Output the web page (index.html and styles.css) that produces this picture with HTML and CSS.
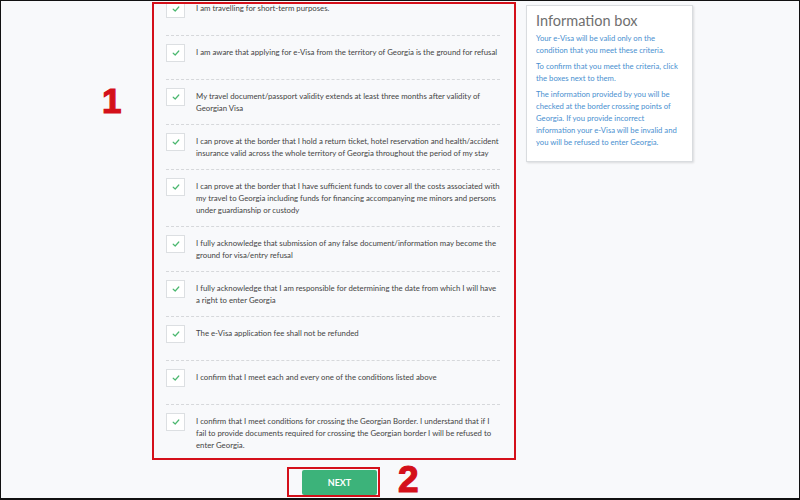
FILE: index.html
```html
<!DOCTYPE html>
<html>
<head>
<meta charset="utf-8">
<link rel="stylesheet" href="styles.css">
</head>
<body>
<div class="frame">
  <div class="gutter"><span class="mark">1</span></div>
  <div class="center">
    <div class="redbox">
      <ul class="list">
        <li class="item"><span class="cb"><svg viewBox="0 0 10 10"><polyline points="2.2,5.2 4.2,7 7.8,3"/></svg></span><p class="txt">I am travelling for short-term purposes.</p></li>
        <li class="item"><span class="cb"><svg viewBox="0 0 10 10"><polyline points="2.2,5.2 4.2,7 7.8,3"/></svg></span><p class="txt">I am aware that applying for e-Visa from the territory of Georgia is the ground for refusal</p></li>
        <li class="item"><span class="cb"><svg viewBox="0 0 10 10"><polyline points="2.2,5.2 4.2,7 7.8,3"/></svg></span><p class="txt">My travel document/passport validity extends at least three months after validity of<br>Georgian Visa</p></li>
        <li class="item"><span class="cb"><svg viewBox="0 0 10 10"><polyline points="2.2,5.2 4.2,7 7.8,3"/></svg></span><p class="txt">I can prove at the border that I hold a return ticket, hotel reservation and health/accident<br>insurance valid across the whole territory of Georgia throughout the period of my stay</p></li>
        <li class="item"><span class="cb"><svg viewBox="0 0 10 10"><polyline points="2.2,5.2 4.2,7 7.8,3"/></svg></span><p class="txt">I can prove at the border that I have sufficient funds to cover all the costs associated with<br>my travel to Georgia including funds for financing accompanying me minors and persons<br>under guardianship or custody</p></li>
        <li class="item"><span class="cb"><svg viewBox="0 0 10 10"><polyline points="2.2,5.2 4.2,7 7.8,3"/></svg></span><p class="txt">I fully acknowledge that submission of any false document/information may become the<br>ground for visa/entry refusal</p></li>
        <li class="item"><span class="cb"><svg viewBox="0 0 10 10"><polyline points="2.2,5.2 4.2,7 7.8,3"/></svg></span><p class="txt">I fully acknowledge that I am responsible for determining the date from which I will have<br>a right to enter Georgia</p></li>
        <li class="item"><span class="cb"><svg viewBox="0 0 10 10"><polyline points="2.2,5.2 4.2,7 7.8,3"/></svg></span><p class="txt">The e-Visa application fee shall not be refunded</p></li>
        <li class="item"><span class="cb"><svg viewBox="0 0 10 10"><polyline points="2.2,5.2 4.2,7 7.8,3"/></svg></span><p class="txt">I confirm that I meet each and every one of the conditions listed above</p></li>
        <li class="item last"><span class="cb"><svg viewBox="0 0 10 10"><polyline points="2.2,5.2 4.2,7 7.8,3"/></svg></span><p class="txt">I confirm that I meet conditions for crossing the Georgian Border. I understand that if I<br>fail to provide documents required for crossing the Georgian border I will be refused to<br>enter Georgia.</p></li>
      </ul>
    </div>
    <div class="actions">
      <div class="btnbox"><button class="next">NEXT</button></div>
      <span class="mark two">2</span>
    </div>
  </div>
  <aside class="info">
    <h2 class="info-title">Information box</h2>
    <p class="info-p">Your e-Visa will be valid only on the<br>condition that you meet these criteria.</p>
    <p class="info-p">To confirm that you meet the criteria, click<br>the boxes next to them.</p>
    <p class="info-p">The information provided by you will be<br>checked at the border crossing points of<br>Georgia. If you provide incorrect<br>information your e-Visa will be invalid and<br>you will be refused to enter Georgia.</p>
  </aside>
</div>
</body>
</html>
```

FILE: styles.css
```css
* { box-sizing: border-box; }
html, body { margin: 0; padding: 0; }
body { width: 800px; height: 500px; overflow: hidden; font-family: Lato, "Open Sans", sans-serif; }

.frame {
  width: 800px;
  height: 500px;
  display: flex;
  align-items: flex-start;
  background: #f8f9fb;
  border: 1px solid #111;
  border-bottom-width: 2px;
  overflow: hidden;
}

.gutter {
  width: 151px;
  padding: 82px 0 0 101px;
  flex: none;
}

.mark {
  font-family: "Liberation Sans", Arial, sans-serif;
  font-weight: 900;
  font-size: 35px;
  line-height: 1;
  color: #d4101a;
  -webkit-text-stroke: 1.2px #d4101a;
}

.center {
  width: 364px;
  flex: none;
  display: flex;
  flex-direction: column;
}

.redbox {
  margin-top: 1px;
  height: 458px;
  border: 2px solid #d4101a;
  overflow: hidden;
  padding: 0 14px 0 12px;
}

.list {
  list-style: none;
  margin: -12px 0 0 0;
  padding: 0;
}

.item {
  display: flex;
  align-items: flex-start;
  padding: 8px 0 10px 0;
  border-bottom: 1px dashed #d6d8db;
}
.item.last { border-bottom: none; }

.cb {
  flex: none;
  width: 19px;
  height: 18px;
  margin-bottom: 7px;
  background: #fff;
  border: 1px solid #dcdfe2;
  display: flex;
  align-items: center;
  justify-content: center;
}
.cb svg { width: 10px; height: 10px; }
.cb polyline { fill: none; stroke: #4cb870; stroke-width: 1.2; stroke-linecap: round; stroke-linejoin: round; }

.txt {
  margin: 0 0 0 11px;
  padding-top: 2px;
  font-size: 7.8px;
  line-height: 12px;
  color: #444;
  white-space: nowrap;
}

.actions {
  display: flex;
  align-items: flex-start;
  margin-top: 7px;
  padding-left: 135px;
}

.btnbox {
  width: 93px;
  height: 30px;
  border: 2px solid #d4101a;
  padding: 1px 1px 0 13px;
}

.next {
  width: 75px;
  height: 25px;
  border: none;
  border-radius: 2px;
  background: #3cb37a;
  color: #fff;
  font-family: Lato, sans-serif;
  font-weight: 700;
  font-size: 9px;
  padding: 0;
}

.two { margin: -2px 0 0 18px; font-size: 37px; line-height: 30px; }

.info {
  margin: 4px 0 0 10px;
  width: 167px;
  height: 157px;
  flex: none;
  background: #fff;
  border: 1px solid #d9dcdf;
  box-shadow: 1px 1px 2px rgba(0,0,0,0.12);
  padding: 6px 8px 0 9px;
}

.info-title {
  margin: 0 0 2px 0;
  font-size: 14.5px;
  font-weight: 400;
  color: #6f6f6f;
  line-height: 18px;
}

.info-p {
  margin: 0 0 4px 0;
  font-size: 7.7px;
  line-height: 12px;
  color: #4a90d0;
  white-space: nowrap;
}
```
